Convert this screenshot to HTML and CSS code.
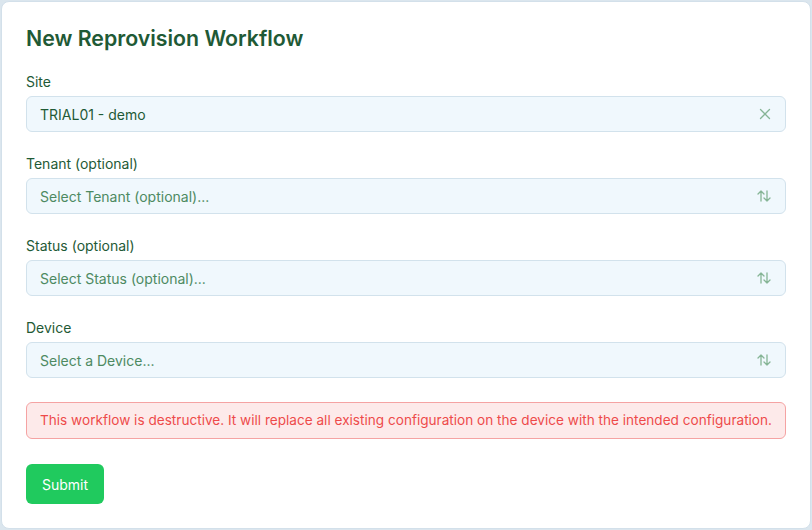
FILE: index.html
```html
<!DOCTYPE html>
<html lang="en">
<head>
    <meta charset="UTF-8">
    <meta name="viewport" content="width=device-width, initial-scale=1.0">
    <title>New Reprovision Workflow</title>
    <link rel="stylesheet" href="styles.css">
</head>
<body>
<div class="card">
    <h1>New Reprovision Workflow</h1>
    <form id="workflow-form">
        <div class="field">
            <label>Site</label>
            <div class="select">
                <span class="value">TRIAL01 - demo</span>
                <svg class="icon" width="14" height="14" viewBox="0 0 14 14"><path d="M2.5 2.5l9 9M11.5 2.5l-9 9" stroke="currentColor" stroke-width="1.3" fill="none" stroke-linecap="round"/></svg>
            </div>
        </div>
        <div class="field">
            <label>Tenant (optional)</label>
            <div class="select">
                <span class="placeholder">Select Tenant (optional)...</span>
                <svg class="icon" width="16" height="16" viewBox="0 0 16 16"><path d="M5 13V3M2 6l3-3 3 3M11 3v10M8 10l3 3 3-3" stroke="currentColor" stroke-width="1.3" fill="none" stroke-linecap="round" stroke-linejoin="round"/></svg>
            </div>
        </div>
        <div class="field">
            <label>Status (optional)</label>
            <div class="select">
                <span class="placeholder">Select Status (optional)...</span>
                <svg class="icon" width="16" height="16" viewBox="0 0 16 16"><path d="M5 13V3M2 6l3-3 3 3M11 3v10M8 10l3 3 3-3" stroke="currentColor" stroke-width="1.3" fill="none" stroke-linecap="round" stroke-linejoin="round"/></svg>
            </div>
        </div>
        <div class="field">
            <label>Device</label>
            <div class="select">
                <span class="placeholder">Select a Device...</span>
                <svg class="icon" width="16" height="16" viewBox="0 0 16 16"><path d="M5 13V3M2 6l3-3 3 3M11 3v10M8 10l3 3 3-3" stroke="currentColor" stroke-width="1.3" fill="none" stroke-linecap="round" stroke-linejoin="round"/></svg>
            </div>
        </div>
        <div class="alert">This workflow is destructive. It will replace all existing configuration on the device with the intended configuration.</div>
        <button type="submit">Submit</button>
    </form>
</div>
</body>
</html>
```

FILE: styles.css
```css
body {
    margin: 0;
    padding: 1px;
    background-color: #dbe6ee;
    font-family: Inter, "Noto Sans", sans-serif;
}
.card {
    background-color: #fff;
    border: 1px solid #d3e0ea;
    border-radius: 8px;
    padding: 24px;
    height: 478px;
}
h1 {
    margin: 0 0 22px 0;
    font-size: 21.3px;
    line-height: 24px;
    font-weight: 600;
    color: #1f5a36;
}
.field {
    margin-bottom: 22px;
}
label {
    display: block;
    font-size: 14px;
    line-height: 20px;
    color: #1f5a36;
    margin-bottom: 4px;
}
.select {
    display: flex;
    align-items: center;
    justify-content: space-between;
    height: 36px;
    box-sizing: border-box;
    padding: 0 13px;
    background-color: #f0f8fd;
    border: 1px solid #d2e2ec;
    border-radius: 6px;
    font-size: 14px;
}
.value {
    color: #1f5a36;
}
.placeholder {
    color: #4d8a62;
}
.icon {
    color: #86b596;
}
.alert {
    margin-top: 24px;
    padding: 9px 13px;
    font-size: 13.6px;
    line-height: 17px;
    height: 37px;
    box-sizing: border-box;
    color: #ee4a4a;
    background-color: #fdeaea;
    border: 1px solid #f5a3a3;
    border-radius: 6px;
    white-space: nowrap;
}
button {
    margin-top: 25px;
    height: 40px;
    padding: 0 16px;
    background-color: #20ca5e;
    color: white;
    font-family: inherit;
    font-size: 14px;
    border: none;
    border-radius: 6px;
    cursor: pointer;
}
button:hover {
    background-color: #1cb854;
}
```
